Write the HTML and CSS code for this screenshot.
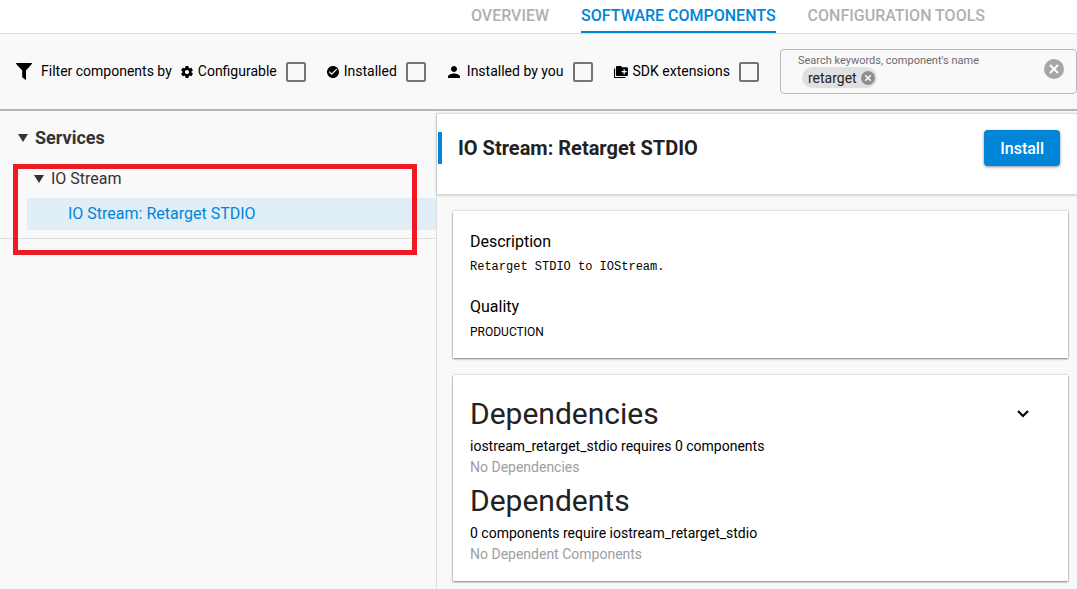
FILE: index.html
```html
<!DOCTYPE html>
<html lang="en">
<head>
<meta charset="utf-8">
<meta name="viewport" content="width=device-width, initial-scale=1">
<title>Software Components</title>
<link rel="stylesheet" href="styles.css">
</head>
<body>
<nav class="tabs">
  <a class="tab" href="#overview">OVERVIEW</a>
  <a class="tab tab-active" href="#components" aria-current="page">SOFTWARE COMPONENTS</a>
  <a class="tab" href="#tools">CONFIGURATION TOOLS</a>
</nav>

<section class="filters">
  <div class="filters-title">
    <svg class="icon-funnel" viewBox="0 0 16 17" aria-hidden="true"><path d="M.6 0h14.8c.6 0 .8.5.4 1L10 7.400V16.200c0 .6-.5.8-1 .4L6.600 14.600c-.3-.2-.4-.5-.4-.8V7.400L.2 1C-.2.5.1 0 .6 0z"/></svg>
    <span class="filter-name">Filter components by</span>
  </div>
  <label class="filter">
    <svg class="icon" viewBox="2 2 20 20" aria-hidden="true"><path d="M19.430 12.980c.04-.32.07-.64.07-.98s-.03-.66-.07-.98l2.110-1.650c.19-.15.24-.42.12-.64l-2-3.460c-.12-.22-.39-.3-.61-.22l-2.490 1c-.52-.4-1.080-.73-1.690-.98l-.38-2.650C14.460 2.180 14.250 2 14 2h-4c-.25 0-.46.18-.49.42l-.38 2.650c-.61.25-1.170.59-1.690.98l-2.490-1c-.23-.09-.49 0-.61.22l-2 3.460c-.13.22-.07.49.12.64l2.110 1.650c-.04.32-.07.65-.07.98s.03.66.07.98l-2.110 1.650c-.19.15-.24.42-.12.64l2 3.460c.12.22.39.3.61.22l2.490-1c.52.4 1.080.73 1.690.98l.38 2.650c.03.24.24.42.49.42h4c.25 0 .46-.18.49-.42l.38-2.650c.61-.25 1.170-.59 1.690-.98l2.490 1c.23.09.49 0 .61-.22l2-3.460c.12-.22.07-.49-.12-.64l-2.110-1.650zM12 15.500c-1.930 0-3.500-1.570-3.500-3.500s1.570-3.500 3.500-3.500 3.500 1.570 3.500 3.500-1.570 3.500-3.500 3.500z"/></svg>
    <span class="filter-name">Configurable</span>
    <input class="check" type="checkbox">
  </label>
  <label class="filter">
    <svg class="icon" viewBox="2 2 20 20" aria-hidden="true"><path d="M12 2C6.480 2 2 6.480 2 12s4.480 10 10 10 10-4.480 10-10S17.520 2 12 2zm-2 15l-5-5 1.410-1.410L10 14.170l7.590-7.590L19 8l-9 9z"/></svg>
    <span class="filter-name">Installed</span>
    <input class="check" type="checkbox">
  </label>
  <label class="filter filter-user">
    <svg class="icon" viewBox="4 4 16 16" aria-hidden="true"><path d="M12 12c2.210 0 4-1.790 4-4s-1.790-4-4-4-4 1.790-4 4 1.790 4 4 4zm0 2c-2.670 0-8 1.340-8 4v2h16v-2c0-2.660-5.330-4-8-4z"/></svg>
    <span class="filter-name">Installed by you</span>
    <input class="check" type="checkbox">
  </label>
  <label class="filter">
    <svg class="icon icon-wide" viewBox="1 2 22 19" aria-hidden="true"><path d="M2 6H.8v13.200c0 1.100.9 2 2 2H19V19.500H2.600V6zM21 4h-7l-2-2H6c-1.100 0-2 .9-2 2v12c0 1.100.9 2 2 2h15c1.100 0 2-.9 2-2V6c0-1.100-.9-2-2-2zm0 8h-3v3h-2v-3h-3v-2h3V7h2v3h3v2z"/></svg>
    <span class="filter-name">SDK extensions</span>
    <input class="check" type="checkbox">
  </label>
  <div class="search">
    <div class="search-body">
      <label class="search-label" for="search">Search keywords, component's name</label>
      <div class="search-line">
        <span class="chip">retarget
          <button class="plain" type="button" aria-label="Remove retarget"><svg class="chip-x" viewBox="2 2 20 20" aria-hidden="true"><circle cx="12" cy="12" r="10"/><path d="M8 8l8 8M16 8l-8 8"/></svg></button>
        </span>
        <input class="search-input" id="search" type="text">
      </div>
    </div>
    <button class="plain" type="button" aria-label="Clear search"><svg class="clear-x" viewBox="2 2 20 20" aria-hidden="true"><circle cx="12" cy="12" r="10"/><path d="M8 8l8 8M16 8l-8 8"/></svg></button>
  </div>
</section>

<main class="main">
  <aside class="sidebar">
    <div class="tree">
      <button class="row row-group" type="button"><svg class="caret" viewBox="0 0 10 8" aria-hidden="true"><path d="M0 0h10L5 8z"/></svg>Services</button>
      <button class="row row-sub" type="button"><svg class="caret" viewBox="0 0 10 8" aria-hidden="true"><path d="M0 0h10L5 8z"/></svg>IO Stream</button>
      <a class="row row-leaf" href="#retarget">IO Stream: Retarget STDIO</a>
    </div>
    <div class="highlight"></div>
  </aside>

  <section class="detail">
    <header class="detail-head">
      <h1 class="detail-title">IO Stream: Retarget STDIO</h1>
      <button class="install" type="button">Install</button>
    </header>
    <div class="cards">
      <article class="card">
        <h2 class="field">Description</h2>
        <p class="mono">Retarget STDIO to IOStream.</p>
        <h2 class="field">Quality</h2>
        <p class="small">PRODUCTION</p>
      </article>
      <article class="card card-deps">
        <div class="deps">
          <h2 class="big">Dependencies</h2>
          <p class="line">iostream_retarget_stdio requires 0 components</p>
          <p class="line muted">No Dependencies</p>
          <h2 class="big">Dependents</h2>
          <p class="line">0 components require iostream_retarget_stdio</p>
          <p class="line muted">No Dependent Components</p>
        </div>
        <button class="plain toggle" type="button" aria-label="Collapse dependencies"><svg class="chevron" viewBox="0 0 12 8" aria-hidden="true"><path d="M1 1l5 5 5-5"/></svg></button>
      </article>
    </div>
  </section>
</main>
</body>
</html>
```

FILE: styles.css
```css
* {
  box-sizing: border-box;
}

body {
  margin: 0;
  min-height: 100vh;
  display: flex;
  flex-direction: column;
  background: #f9f9f9;
  color: #000;
  font-family: Roboto, "Liberation Sans", sans-serif;
  font-size: 14px;
  line-height: 20px;
}

h1, h2, p {
  margin: 0;
  font-weight: 400;
}

button, input {
  font: inherit;
}

.tabs {
  display: flex;
  justify-content: flex-end;
  gap: 32px;
  padding-right: 92px;
  background: #fff;
  border-bottom: 1px solid #dedede;
}

.tab {
  height: 33px;
  padding-top: 6px;
  color: #b0b0b0;
  font-size: 16px;
  font-weight: 500;
  text-decoration: none;
}

.tab-active {
  color: #0085d9;
  border-bottom: 2px solid #0085d9;
}

.filters {
  display: flex;
  align-items: center;
  gap: 21px;
  padding: 15px 0 15px 16px;
  border-bottom: 2px solid #b5b5b5;
  white-space: nowrap;
}

.filters-title {
  display: flex;
  align-items: center;
  gap: 9px;
  margin-right: -12px;
}

.icon-funnel {
  width: 16px;
  height: 17px;
}

.filter {
  display: flex;
  align-items: center;
  gap: 5px;
}

.filter-name {
  padding-bottom: 2px;
}

.filter-user {
  margin-left: 1px;
}

.filter-user .icon {
  margin-right: 2px;
}

.icon {
  width: 12px;
  height: 12px;
}

.icon-wide {
  width: 14px;
}

.check {
  appearance: none;
  width: 20px;
  height: 20px;
  margin: 0 0 0 4px;
  background: transparent;
  border: 2px solid #757575;
  border-radius: 2px;
}

.check:checked {
  background: #0085d9;
}

.search {
  flex: 1;
  min-width: 0;
  display: flex;
  align-items: flex-start;
  padding: 4px 12px 5px 17px;
  border: 1px solid #b9b9b9;
  border-radius: 4px;
}

.search-body {
  flex: 1;
  min-width: 0;
}

.search-label {
  display: block;
  color: #6b6b6b;
  font-size: 11px;
  line-height: 13px;
}

.search-line {
  display: flex;
  padding-left: 4px;
}

.chip {
  display: flex;
  align-items: center;
  gap: 4px;
  height: 21px;
  padding: 0 2px 0 6px;
  background: #e0e0e0;
  border-radius: 11px;
  color: #222;
}

.search-input {
  flex: 1;
  min-width: 0;
  height: 20px;
  padding: 0 4px;
  background: transparent;
  border: 0;
  outline: 0;
}

.plain {
  display: flex;
  padding: 0;
  background: none;
  border: 0;
  cursor: pointer;
}

.chip-x,
.clear-x {
  fill: #a6a6a6;
  stroke: #fff;
  stroke-width: 2;
}

.chip-x circle,
.clear-x circle {
  stroke: none;
}

.chip-x {
  width: 14px;
  height: 14px;
  fill: #8e8e8e;
}

.clear-x {
  width: 20px;
  height: 20px;
  margin-top: 5px;
}

.main {
  flex: 1;
  display: grid;
  grid-template-columns: 436px 1fr;
}

.sidebar {
  position: relative;
}

.tree {
  display: flex;
  flex-direction: column;
  padding: 11px 0 8px;
  border-bottom: 1px solid #dedede;
}

.row {
  display: flex;
  align-items: center;
  height: 32px;
  padding: 0;
  background: none;
  border: 0;
  color: #333;
  font-size: 16px;
  text-align: left;
  text-decoration: none;
}

.caret {
  width: 10px;
  height: 8px;
  margin-right: 7px;
  fill: #333;
}

.row-group {
  padding-left: 18px;
  font-size: 18px;
  font-weight: 700;
}

.row-sub {
  margin: 9px 0 3px;
  padding-left: 34px;
}

.row-leaf {
  margin-left: 27px;
  padding-left: 41px;
  background: #e0eef5;
  color: #0085d9;
}

.highlight {
  position: absolute;
  top: 53px;
  left: 13px;
  right: 19px;
  height: 91px;
  border: 5px solid #ed1c24;
  pointer-events: none;
}

.detail {
  margin-top: 2px;
  min-width: 0;
  border-left: 1px solid #dedede;
}

.detail-head {
  display: flex;
  align-items: center;
  justify-content: space-between;
  padding: 16px 17px 28px 1px;
  background: #fff;
  border-top: 1px solid #dedede;
  box-shadow: 0 1px 3px rgba(0, 0, 0, 0.25);
}

.detail-title {
  padding-left: 16px;
  border-left: 4px solid #0085d9;
  color: #222;
  font-size: 20px;
  font-weight: 700;
  line-height: 32px;
}

.install {
  height: 36px;
  padding: 1px 16px 0;
  background: #0085d9;
  border: 0;
  border-radius: 4px;
  box-shadow: 0 1px 3px rgba(0, 0, 0, 0.45);
  color: #fff;
  font-size: 16px;
  font-weight: 500;
}

.cards {
  display: flex;
  flex-direction: column;
  gap: 17px;
  padding: 17px 9px 7px 16px;
}

.card {
  padding: 21px 17px 16px;
  background: #fff;
  box-shadow: 0 1px 2px rgba(0, 0, 0, 0.45), 0 0 2px rgba(0, 0, 0, 0.2);
}

.field {
  font-size: 16px;
}

.mono {
  margin: 5px 0 20px;
  font-family: "Liberation Mono", monospace;
  font-size: 12px;
}

.small {
  margin-top: 5px;
  font-size: 12px;
}

.card-deps {
  display: flex;
  justify-content: space-between;
  align-items: flex-start;
  padding: 19px 38px 16px 17px;
}

.big {
  color: #222;
  font-size: 30px;
  line-height: 40px;
}

.line {
  line-height: 21px;
}

.big + .line {
  margin-top: 2px;
}

.line + .big {
  margin-top: 3px;
}

.muted {
  color: #9e9e9e;
}

.toggle {
  margin-top: 16px;
}

.chevron {
  width: 14px;
  height: 8px;
  fill: none;
  stroke: #000;
  stroke-width: 2;
}
```
